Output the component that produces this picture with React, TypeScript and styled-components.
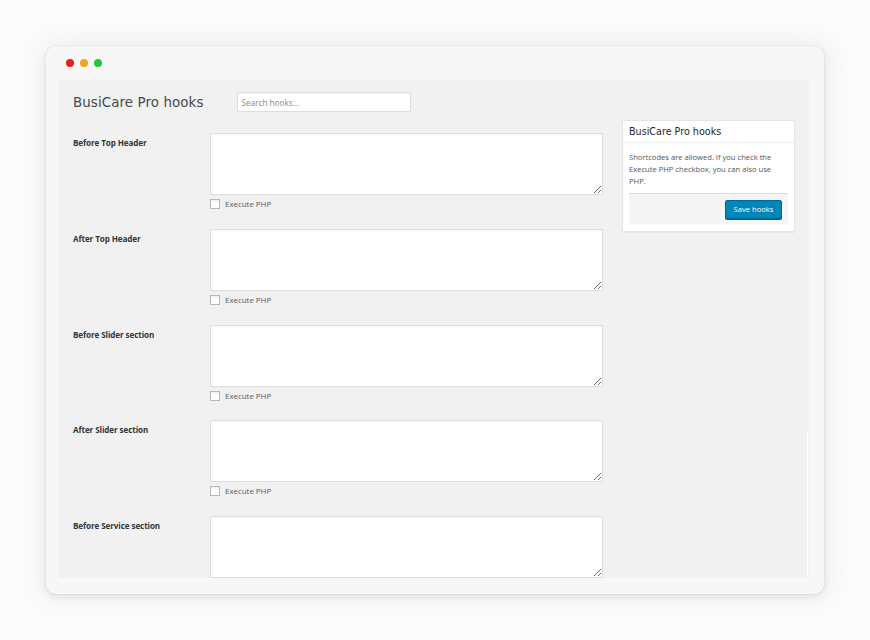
import React from "react";
import styled, { createGlobalStyle } from "styled-components";

const Global = createGlobalStyle`
  html, body { margin: 0; padding: 0; background: #fcfcfc; }
  * { box-sizing: border-box; }
`;

const Page = styled.div`
  width: 870px;
  height: 640px;
  padding: 46px 46px 0 46px;
  background: #fcfcfc;
`;

const Window = styled.div`
  width: 778px;
  height: 548px;
  background: #f7f7f7;
  border-radius: 10px;
  box-shadow: 0 0 0 1px rgba(0, 0, 0, 0.03), 0 3px 8px rgba(0, 0, 0, 0.08),
    0 0 26px 10px rgba(0, 0, 0, 0.045);
  padding: 0 15px 16px 13px;
  display: flex;
  flex-direction: column;
`;

const TitleBar = styled.div`
  height: 34px;
  display: flex;
  align-items: center;
  gap: 6px;
  padding-left: 7px;
`;

const Dot = styled.span<{ $c: string }>`
  width: 8px;
  height: 8px;
  border-radius: 50%;
  background: ${(p) => p.$c};
`;

const Panel = styled.div`
  flex: 1;
  background: #f1f1f1;
  padding: 12px 14px 0 14px;
  display: flex;
  gap: 19px;
  overflow: hidden;
  position: relative;
`;

const EdgeLine = styled.span`
  position: absolute;
  right: 1px;
  top: 352px;
  bottom: 2px;
  width: 1px;
  background: #fff;
`;

const MainCol = styled.div`
  width: 530px;
  flex: 0 0 530px;
`;

const Header = styled.div`
  display: flex;
  align-items: center;
  height: 20px;
  gap: 33px;
  margin-bottom: 21px;
`;

const Title = styled.h1`
  margin: 0;
  font-family: "DejaVu Sans", sans-serif;
  font-weight: 400;
  font-size: 13.4px;
  color: #44494e;
  letter-spacing: 0.1px;
`;

const Search = styled.input`
  width: 174px;
  height: 20px;
  border: 1px solid #dddddd;
  background: #fff;
  box-shadow: inset 0 1px 2px rgba(0, 0, 0, 0.05);
  padding: 0 4px;
  font-family: "Open Sans", sans-serif;
  font-size: 8.2px;
  color: #333;
  outline: none;
  &::placeholder { color: #8a8a8a; }
`;

const Row = styled.div`
  display: grid;
  grid-template-columns: 137px 393px;
  height: 95.75px;
`;

const Label = styled.div`
  font-family: "Open Sans", sans-serif;
  font-weight: 700;
  font-size: 8.1px;
  color: #32373c;
  padding-top: 4px;
  letter-spacing: -0.1px;
`;

const Field = styled.div`
  display: flex;
  flex-direction: column;
  gap: 4px;
`;

const Area = styled.textarea`
  width: 393px;
  height: 62px;
  border: 1px solid #dddddd;
  background: #fff;
  box-shadow: inset 0 1px 2px rgba(0, 0, 0, 0.04);
  resize: vertical;
  margin: 0;
  display: block;
  outline: none;
`;

const CheckRow = styled.label`
  display: flex;
  align-items: center;
  gap: 5px;
  height: 10px;
  font-family: "Open Sans", sans-serif;
  font-size: 7.9px;
  color: #555d66;
`;

const Check = styled.input`
  appearance: none;
  margin: 0;
  width: 10px;
  height: 10px;
  border: 1px solid #b4b9be;
  background: #fff;
  box-shadow: inset 0 1px 2px rgba(0, 0, 0, 0.08);
`;

const Side = styled.div`
  width: 173px;
  flex: 0 0 173px;
  margin-top: 28px;
  align-self: flex-start;
  background: #fff;
  border: 1px solid #e5e5e5;
  box-shadow: 0 1px 1px rgba(0, 0, 0, 0.04);
`;

const SideHead = styled.div`
  height: 22px;
  display: flex;
  align-items: center;
  padding: 0 6px;
  border-bottom: 1px solid #eeeeee;
  font-family: "DejaVu Sans", sans-serif;
  font-size: 9.6px;
  color: #23282d;
`;

const SideBody = styled.div`
  padding: 8px 6px 7px 6px;
`;

const SideText = styled.p`
  margin: 0 0 6px 0;
  max-width: 150px;
  font-family: "Open Sans", sans-serif;
  font-size: 7.6px;
  line-height: 12px;
  color: #555;
`;

const Footer = styled.div`
  height: 31px;
  background: #f5f5f5;
  border-top: 1px solid #dddddd;
  display: flex;
  align-items: center;
  justify-content: flex-end;
  padding: 0 6px;
`;

const Button = styled.button`
  width: 57px;
  height: 19px;
  background: #0085ba;
  border: 1px solid #006799;
  border-radius: 2px;
  box-shadow: 0 1px 0 #006799;
  color: #fff;
  font-family: "Open Sans", sans-serif;
  font-size: 7.6px;
  padding: 0;
`;

const hooks = [
  "Before Top Header",
  "After Top Header",
  "Before Slider section",
  "After Slider section",
  "Before Service section",
];

export default function App() {
  return (
    <Page>
      <Global />
      <Window>
        <TitleBar>
          <Dot $c="#ee1c13" />
          <Dot $c="#f5a41d" />
          <Dot $c="#27c43b" />
        </TitleBar>
        <Panel>
          <MainCol>
            <Header>
              <Title>BusiCare Pro hooks</Title>
              <Search placeholder="Search hooks..." />
            </Header>
            {hooks.map((h) => (
              <Row key={h}>
                <Label>{h}</Label>
                <Field>
                  <Area />
                  <CheckRow>
                    <Check type="checkbox" />
                    Execute PHP
                  </CheckRow>
                </Field>
              </Row>
            ))}
          </MainCol>
          <Side>
            <SideHead>BusiCare Pro hooks</SideHead>
            <SideBody>
              <SideText>
                Shortcodes are allowed. If you check the Execute PHP checkbox,
                you can also use PHP.
              </SideText>
              <Footer>
                <Button>Save hooks</Button>
              </Footer>
            </SideBody>
          </Side>
          <EdgeLine />
        </Panel>
      </Window>
    </Page>
  );
}
